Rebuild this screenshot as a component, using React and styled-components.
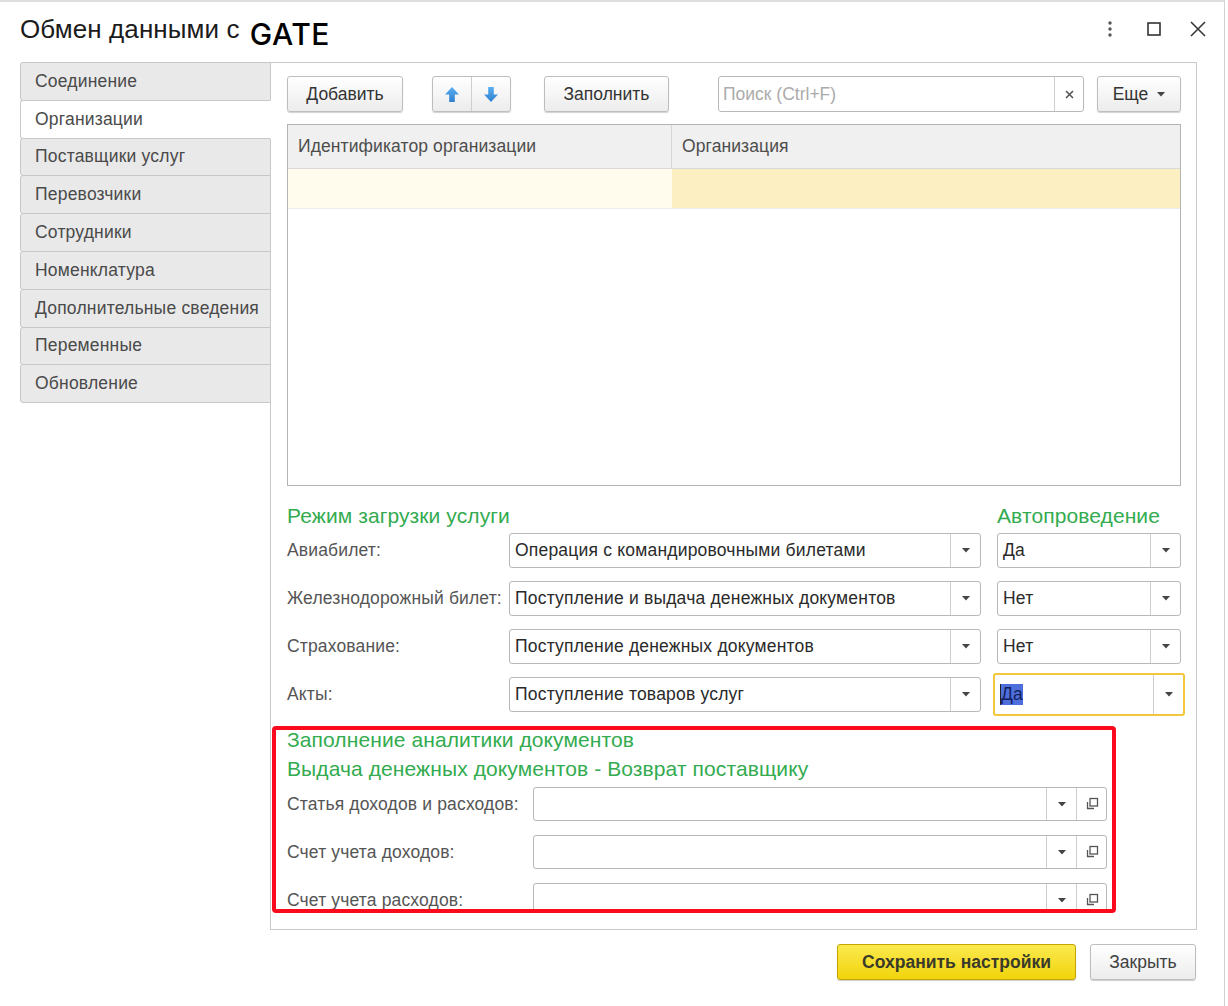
import React from 'react';
import styled, { createGlobalStyle, css } from 'styled-components';

const Global = createGlobalStyle`
  html, body { margin: 0; padding: 0; background: #fff; }
  body { font-family: "Liberation Sans", Arial, sans-serif; color: #333; }
  * { box-sizing: border-box; }
`;

const GREEN = '#33ab4f';

const Window = styled.div`
  width: 1225px;
  height: 1006px;
  background: #fff;
  border-top: 2px solid #dedede;
  border-right: 1px solid #d2d2d2;
  overflow: hidden;
`;

const Header = styled.div`
  display: flex;
  align-items: center;
  height: 54px;
  padding: 0 4px 0 20px;
`;

const Title = styled.h1`
  margin: 0;
  display: flex;
  align-items: center;
  gap: 10px;
  font-weight: normal;
  font-size: 26px;
  letter-spacing: 0.1px;
  color: #1b1b1b;
`;

const Brand = styled.span`
  font-family: Inter, "Liberation Sans", sans-serif;
  font-weight: 500;
  font-size: 30px;
  letter-spacing: 0.6px;
  color: #000;
  margin-top: 10px;
`;

const Controls = styled.div`
  margin-left: auto;
  display: flex;
  align-items: center;
`;

const ControlButton = styled.div`
  width: 44px;
  height: 30px;
  display: flex;
  align-items: center;
  justify-content: center;
`;

const Body = styled.div`
  display: flex;
  align-items: flex-start;
  padding: 6px 0 0 20px;
`;

const Tabs = styled.div`
  width: 250px;
  display: flex;
  flex-direction: column;
`;

const Tab = styled.div`
  position: relative;
  height: 38.8px;
  margin-right: -1px;
  margin-top: -1px;
  &:first-child { margin-top: 0; }
  padding-left: 14px;
  display: flex;
  align-items: center;
  font-size: 17.5px;
  letter-spacing: 0.2px;
  color: #4a4a4a;
  background: #e9e9e9;
  border: 1px solid #c8c8c8;
  border-radius: 3px 0 0 3px;
  white-space: nowrap;
  ${p => p.$active && css`
    background: #fff;
    border-right-color: #fff;
    z-index: 1;
  `}
`;

const Panel = styled.div`
  width: 927px;
  height: 868px;
  border: 1px solid #c9c9c9;
  padding: 13px 15px 0 16px;
  display: flex;
  flex-direction: column;
`;

const Toolbar = styled.div`
  display: flex;
  align-items: center;
  height: 36px;
`;

const ToolButton = styled.div`
  height: 36px;
  width: ${p => p.$w}px;
  margin-left: ${p => p.$ml || 0}px;
  display: flex;
  align-items: center;
  justify-content: center;
  gap: 9px;
  font-size: 17.5px;
  color: #333;
  background: linear-gradient(#ffffff, #ececec);
  border: 1px solid #bdbdbd;
  border-radius: 3px;
  box-shadow: 0 1px 1px rgba(0, 0, 0, 0.18);
`;

const ButtonGroup = styled.div`
  height: 36px;
  width: ${p => p.$w}px;
  margin-left: ${p => p.$ml || 0}px;
  display: flex;
  background: linear-gradient(#ffffff, #ececec);
  border: 1px solid #bdbdbd;
  border-radius: 3px;
  box-shadow: 0 1px 1px rgba(0, 0, 0, 0.18);
`;

const GroupPart = styled.div`
  flex: 1;
  display: flex;
  align-items: center;
  justify-content: center;
  & + & { border-left: 1px solid #cfcfcf; }
`;

const Search = styled.div`
  margin-left: auto;
  width: 366px;
  height: 36px;
  display: flex;
  border: 1px solid #b8b8b8;
  border-radius: 3px;
  background: #fff;
`;

const SearchText = styled.div`
  flex: 1;
  display: flex;
  align-items: center;
  padding-left: 4px;
  font-size: 17.5px;
  color: #ababab;
`;

const SearchClear = styled.div`
  width: 29px;
  border-left: 1px solid #cfcfcf;
  display: flex;
  align-items: center;
  justify-content: center;
`;

const Table = styled.div`
  margin-top: 12px;
  height: 362px;
  border: 1px solid #b3b3b3;
  background: #fff;
`;

const TableRow = styled.div`
  display: grid;
  grid-template-columns: 384px 1fr;
  height: ${p => (p.$head ? 44 : 40)}px;
  border-bottom: 1px solid ${p => (p.$head ? '#d9d9d9' : '#ececec')};
`;

const HeadCell = styled.div`
  background: #f0f0f0;
  display: flex;
  align-items: center;
  padding-left: 10px;
  font-size: 17.5px;
  letter-spacing: 0.1px;
  color: #4d4d4d;
  &:first-child { border-right: 1px solid #d6d6d6; }
`;

const Cell = styled.div`
  background: ${p => p.$bg};
`;

const FormGrid = styled.div`
  display: grid;
  grid-template-columns: ${p => p.$cols};
  column-gap: ${p => p.$gap || 0}px;
  row-gap: ${p => p.$rowGap || 0}px;
  margin-top: ${p => p.$mt || 0}px;
  align-items: center;
`;

const GroupTitle = styled.div`
  font-size: 21px;
  letter-spacing: 0.1px;
  line-height: ${p => p.$lh || 26}px;
  color: ${GREEN};
  white-space: nowrap;
  margin-top: ${p => p.$mt || 0}px;
  grid-column: ${p => p.$span || 'auto'};
`;

const Label = styled.div`
  font-size: 17.5px;
  letter-spacing: 0.15px;
  color: #555;
  white-space: nowrap;
`;

const Field = styled.div`
  height: ${p => p.$h || 35}px;
  display: flex;
  background: #fff;
  border: 1px solid #b8b8b8;
  border-radius: 3px;
  ${p => p.$focused && css`
    border: 2px solid #f3c63c;
    margin: -4px;
    height: ${(p.$h || 35) + 8}px;
  `}
`;

const FieldValue = styled.div`
  flex: 1;
  display: flex;
  align-items: center;
  padding-left: 5px;
  font-size: 17.5px;
  letter-spacing: 0.2px;
  color: #2a2a2a;
  white-space: nowrap;
  overflow: hidden;
`;

const Selected = styled.span`
  background: #4e6fdb;
  color: #13205e;
  border-left: 1.5px solid #222;
`;

const FieldButton = styled.div`
  width: 30px;
  flex: none;
  border-left: 1px solid #cdcdcd;
  display: flex;
  align-items: center;
  justify-content: center;
`;

const RedBox = styled.div`
  margin: 14px 0 0 -15px;
  width: 844px;
  height: 187px;
  border: 4px solid #fb0a1e;
  border-radius: 4px;
  padding-left: 11px;
  overflow: hidden;
`;

const Footer = styled.div`
  display: flex;
  justify-content: flex-end;
  margin-top: 14px;
  padding-right: 28px;
  gap: 14px;
`;

const DialogButton = styled.div`
  height: 36px;
  width: ${p => p.$w}px;
  display: flex;
  align-items: center;
  justify-content: center;
  font-size: 17.5px;
  color: #404040;
  border-radius: 3px;
  border: 1px solid #bdbdbd;
  background: linear-gradient(#ffffff, #ececec);
  box-shadow: 0 1px 1px rgba(0, 0, 0, 0.2);
  ${p => p.$primary && css`
    font-weight: bold;
    color: #3a3a2a;
    border-color: #c4a400;
    background: linear-gradient(#fbe94e, #f1d40c);
  `}
`;

const Caret = () => (
  <svg width="8" height="5" viewBox="0 0 8 5"><path d="M0 0 H8 L4 4.5 Z" fill="#444" /></svg>
);

const Arrow = ({ down }) => (
  <svg width="16" height="17" viewBox="0 0 16 17" style={down ? { transform: 'rotate(180deg)' } : undefined}>
    <defs>
      <linearGradient id={down ? 'ad' : 'au'} x1="0" y1="0" x2="0" y2="1">
        <stop offset="0" stopColor={down ? '#2f7fd0' : '#5ab0f0'} />
        <stop offset="1" stopColor={down ? '#5ab0f0' : '#2f7fd0'} />
      </linearGradient>
    </defs>
    <path d="M8 1 L15 8.5 H10.8 V16 H5.2 V8.5 H1 Z" fill={`url(#${down ? 'ad' : 'au'})`} />
  </svg>
);

const OpenIcon = () => (
  <svg width="14" height="14" viewBox="0 0 14 14" fill="none" stroke="#555" strokeWidth="1.3">
    <rect x="5" y="1.5" width="7.5" height="7.5" />
    <path d="M2.5 5 V11.5 H9" />
  </svg>
);

const tabs = [
  'Соединение', 'Организации', 'Поставщики услуг', 'Перевозчики', 'Сотрудники',
  'Номенклатура', 'Дополнительные сведения', 'Переменные', 'Обновление',
];

const modes = [
  ['Авиабилет:', 'Операция с командировочными билетами', 'Да'],
  ['Железнодорожный билет:', 'Поступление и выдача денежных документов', 'Нет'],
  ['Страхование:', 'Поступление денежных документов', 'Нет'],
  ['Акты:', 'Поступление товаров услуг', 'Да', true],
];

const analytics = ['Статья доходов и расходов:', 'Счет учета доходов:', 'Счет учета расходов:'];

export default function App() {
  return (
    <>
      <Global />
      <Window>
        <Header>
          <Title>Обмен данными с <Brand>GATE</Brand></Title>
          <Controls>
            <ControlButton>
              <svg width="6" height="18" viewBox="0 0 6 18"><circle cx="3" cy="3" r="1.7" fill="#555" /><circle cx="3" cy="9" r="1.7" fill="#555" /><circle cx="3" cy="15" r="1.7" fill="#555" /></svg>
            </ControlButton>
            <ControlButton>
              <svg width="14" height="14" viewBox="0 0 14 14"><rect x="1" y="1" width="12" height="12" fill="none" stroke="#333" strokeWidth="1.6" /></svg>
            </ControlButton>
            <ControlButton>
              <svg width="16" height="16" viewBox="0 0 16 16"><path d="M1 1 L15 15 M15 1 L1 15" stroke="#333" strokeWidth="1.5" /></svg>
            </ControlButton>
          </Controls>
        </Header>
        <Body>
          <Tabs>
            {tabs.map((t, i) => <Tab key={t} $active={i === 1}>{t}</Tab>)}
          </Tabs>
          <Panel>
            <Toolbar>
              <ToolButton $w={116}>Добавить</ToolButton>
              <ButtonGroup $w={79} $ml={29}>
                <GroupPart><Arrow /></GroupPart>
                <GroupPart><Arrow down /></GroupPart>
              </ButtonGroup>
              <ToolButton $w={125} $ml={33}>Заполнить</ToolButton>
              <Search>
                <SearchText>Поиск (Ctrl+F)</SearchText>
                <SearchClear>
                  <svg width="9" height="9" viewBox="0 0 9 9"><path d="M1 1 L8 8 M8 1 L1 8" stroke="#555" strokeWidth="1.6" /></svg>
                </SearchClear>
              </Search>
              <ToolButton $w={84} $ml={13}>Еще <Caret /></ToolButton>
            </Toolbar>
            <Table>
              <TableRow $head>
                <HeadCell>Идентификатор организации</HeadCell>
                <HeadCell>Организация</HeadCell>
              </TableRow>
              <TableRow>
                <Cell $bg="#fffcee" />
                <Cell $bg="#fcf0c3" />
              </TableRow>
            </Table>
            <FormGrid $cols="206px 472px 184px" $gap={16} $mt={17}>
              <GroupTitle $span="1 / 3">Режим загрузки услуги</GroupTitle>
              <GroupTitle>Автопроведение</GroupTitle>
            </FormGrid>
            <FormGrid $cols="206px 472px 184px" $gap={16} $rowGap={13} $mt={4}>
              {modes.map(([label, value, auto, focused]) => (
                <React.Fragment key={label}>
                  <Label>{label}</Label>
                  <Field>
                    <FieldValue>{value}</FieldValue>
                    <FieldButton><Caret /></FieldButton>
                  </Field>
                  <Field $focused={focused}>
                    <FieldValue>{focused ? <Selected>{auto}</Selected> : auto}</FieldValue>
                    <FieldButton><Caret /></FieldButton>
                  </Field>
                </React.Fragment>
              ))}
            </FormGrid>
            <RedBox>
              <GroupTitle $lh={20}>Заполнение аналитики документов</GroupTitle>
              <GroupTitle $lh={20} $mt={9}>Выдача денежных документов - Возврат поставщику</GroupTitle>
              <FormGrid $cols="246px 574px" $rowGap={14} $mt={8}>
                {analytics.map(label => (
                  <React.Fragment key={label}>
                    <Label>{label}</Label>
                    <Field $h={34}>
                      <FieldValue />
                      <FieldButton><Caret /></FieldButton>
                      <FieldButton><OpenIcon /></FieldButton>
                    </Field>
                  </React.Fragment>
                ))}
              </FormGrid>
            </RedBox>
          </Panel>
        </Body>
        <Footer>
          <DialogButton $w={239} $primary>Сохранить настройки</DialogButton>
          <DialogButton $w={106}>Закрыть</DialogButton>
        </Footer>
      </Window>
    </>
  );
}
